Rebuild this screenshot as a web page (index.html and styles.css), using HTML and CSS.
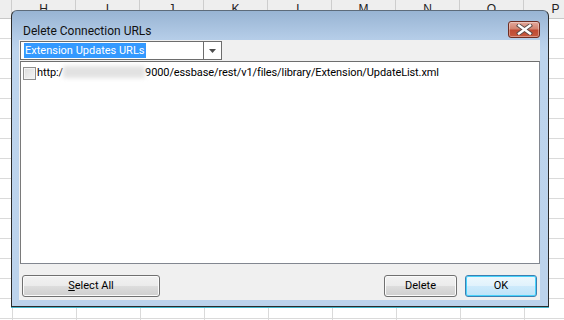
FILE: index.html
```html
<!DOCTYPE html>
<html>
<head>
<meta charset="utf-8">
<link rel="stylesheet" href="styles.css">
</head>
<body>
<div class="sheet">
  <div class="col-headers">
    <div class="colh colh-g"></div>
    <div class="colh">H</div>
    <div class="colh">I</div>
    <div class="colh">J</div>
    <div class="colh">K</div>
    <div class="colh">L</div>
    <div class="colh">M</div>
    <div class="colh">N</div>
    <div class="colh">O</div>
    <div class="colh">P</div>
  </div>
  <div class="grid"></div>
</div>

<div class="dialog">
  <div class="titlebar">
    <span class="title">Delete Connection URLs</span>
    <button class="close" aria-label="Close">
      <svg width="17" height="11" viewBox="0 0 17 11">
        <path d="M3 1.5 L14 9.5 M14 1.5 L3 9.5" stroke="#5a4a48" stroke-width="4.2" stroke-linecap="square" fill="none"/>
        <path d="M3 1.5 L14 9.5 M14 1.5 L3 9.5" stroke="#ffffff" stroke-width="2.4" stroke-linecap="square" fill="none"/>
      </svg>
    </button>
  </div>
  <div class="client">
    <div class="combo">
      <div class="combo-text"><span class="sel">Extension Updates URLs</span></div>
      <div class="combo-btn">
        <svg width="7" height="4" viewBox="0 0 7 4"><path d="M0 0 H7 L3.5 4 Z" fill="#4d4d4d"/></svg>
      </div>
    </div>
    <div class="listbox">
      <div class="item">
        <span class="check"></span>
        <span class="url">http:/<span class="blur"></span>9000/essbase/rest/v1/files/library/Extension/UpdateList.xml</span>
      </div>
    </div>
    <div class="buttons">
      <button class="btn btn-wide"><u>S</u>elect All</button>
      <div class="spacer"></div>
      <button class="btn">Delete</button>
      <button class="btn btn-default">OK</button>
    </div>
  </div>
</div>
</body>
</html>
```

FILE: styles.css
```css
html, body {
  margin: 0;
  padding: 0;
  width: 564px;
  height: 320px;
  overflow: hidden;
  background: #ffffff;
}

.sheet {
  position: relative;
  width: 564px;
  height: 320px;
  display: flex;
  flex-direction: column;
  font-family: "Liberation Sans", Arial, sans-serif;
}

.col-headers {
  display: flex;
  height: 18px;
  flex: none;
  background: #eeeeee;
  border-bottom: 1px solid #c8c8c8;
}

.colh {
  flex: none;
  width: 63px;
  border-right: 1px solid #cdcdcd;
  text-align: center;
  font-size: 12px;
  line-height: 19px;
  color: #222;
}

.colh-g {
  width: 11px;
}

.grid {
  flex: 1;
  background-color: #ffffff;
  background-image:
    linear-gradient(to right, #dadada 0, #dadada 1px, transparent 1px),
    linear-gradient(to bottom, transparent 0, transparent 19px, #dadada 19px, #dadada 20px);
  background-size: 64px 100%, 100% 20px;
  background-position: 12px 0, 0 0;
}

.dialog {
  position: absolute;
  left: 11px;
  top: 10px;
  width: 536px;
  height: 295px;
  border: 1px solid #2b2b2b;
  border-top-color: #5d6b7a;
  border-radius: 6px 6px 0 0;
  box-shadow: 0 1px 0 #46b6cc;
  background: linear-gradient(to bottom, #98b4d3 0, #b5cde8 28px, #bdd4ed 40px, #bcd3ec 100%);
  display: flex;
  flex-direction: column;
  font-family: Roboto, "Noto Sans", sans-serif;
  font-size: 11px;
  color: #000;
}

.titlebar {
  height: 29px;
  flex: none;
  display: flex;
  align-items: flex-start;
  padding: 0 8px 0 11px;
}

.title {
  flex: 1;
  padding-top: 12px;
  font-size: 12px;
  line-height: 16px;
  color: #111;
}

.close {
  margin-top: 10px;
  width: 32px;
  height: 17px;
  padding: 0;
  border: 1px solid #6e2d22;
  border-radius: 3px;
  background: linear-gradient(to bottom, #e3a89b 0, #d38470 45%, #bf4a33 55%, #c75a40 100%);
  box-shadow: inset 0 0 0 1px rgba(255,255,255,0.35);
  display: flex;
  align-items: center;
  justify-content: center;
}

.client {
  flex: 1;
  margin: 0 8px 6px 7px;
  background: #f0f0f0;
  padding: 1px 1px 0 1px;
  display: flex;
  flex-direction: column;
}

.combo {
  width: 200px;
  height: 17px;
  border: 1px solid #6d6d6d;
  background: #ffffff;
  display: flex;
  flex: none;
}

.combo-text {
  flex: 1;
  padding: 1px 0 0 3px;
}

.sel {
  display: inline-block;
  background: #3399ff;
  color: #ffffff;
  line-height: 15px;
  padding: 0 1px;
  font-size: 11px;
}

.combo-btn {
  width: 17px;
  border-left: 1px solid #6d6d6d;
  display: flex;
  align-items: center;
  justify-content: center;
}

.listbox {
  margin-top: 1px;
  width: 518px;
  height: 201px;
  border: 1px solid #828790;
  border-top-color: #6e6e6e;
  border-left-color: #7a7a7a;
  background: #ffffff;
  flex: none;
}

.item {
  display: flex;
  align-items: center;
  padding: 4px 0 0 2px;
  height: 14px;
}

.check {
  width: 11px;
  height: 11px;
  border: 1px solid #8f8f8f;
  background: linear-gradient(135deg, #dcdcdc 0, #f6f6f6 100%);
  box-shadow: inset 0 0 0 1px #f4f4f4;
  margin-right: 1px;
  flex: none;
}

.url {
  line-height: 14px;
  white-space: nowrap;
  color: #000;
  letter-spacing: -0.1px;
}

.blur {
  display: inline-block;
  width: 82px;
  height: 12px;
  vertical-align: -2px;
  background: #e2e2e2;
  filter: blur(2px);
}

.buttons {
  display: flex;
  align-items: center;
  gap: 8px;
  padding: 11px 2px 0 2px;
}

.spacer {
  flex: 1;
}

.btn {
  width: 73px;
  height: 22px;
  padding: 0;
  border: 1px solid #707070;
  border-radius: 3px;
  background: linear-gradient(to bottom, #f2f2f2 0, #ebebeb 50%, #dddddd 51%, #cfcfcf 100%);
  box-shadow: inset 0 0 0 1px #fbfbfb;
  font-family: Roboto, "Noto Sans", sans-serif;
  font-size: 11px;
  color: #000;
  line-height: 18px;
}

.btn-wide {
  width: 138px;
}

.btn-default {
  width: 72px;
  border-color: #3c7fb1;
  background: linear-gradient(to bottom, #eef8fd 0, #e0f2fc 50%, #cdeafb 51%, #bde3f8 100%);
  box-shadow: inset 0 0 0 1px #48d2fb;
}
```
